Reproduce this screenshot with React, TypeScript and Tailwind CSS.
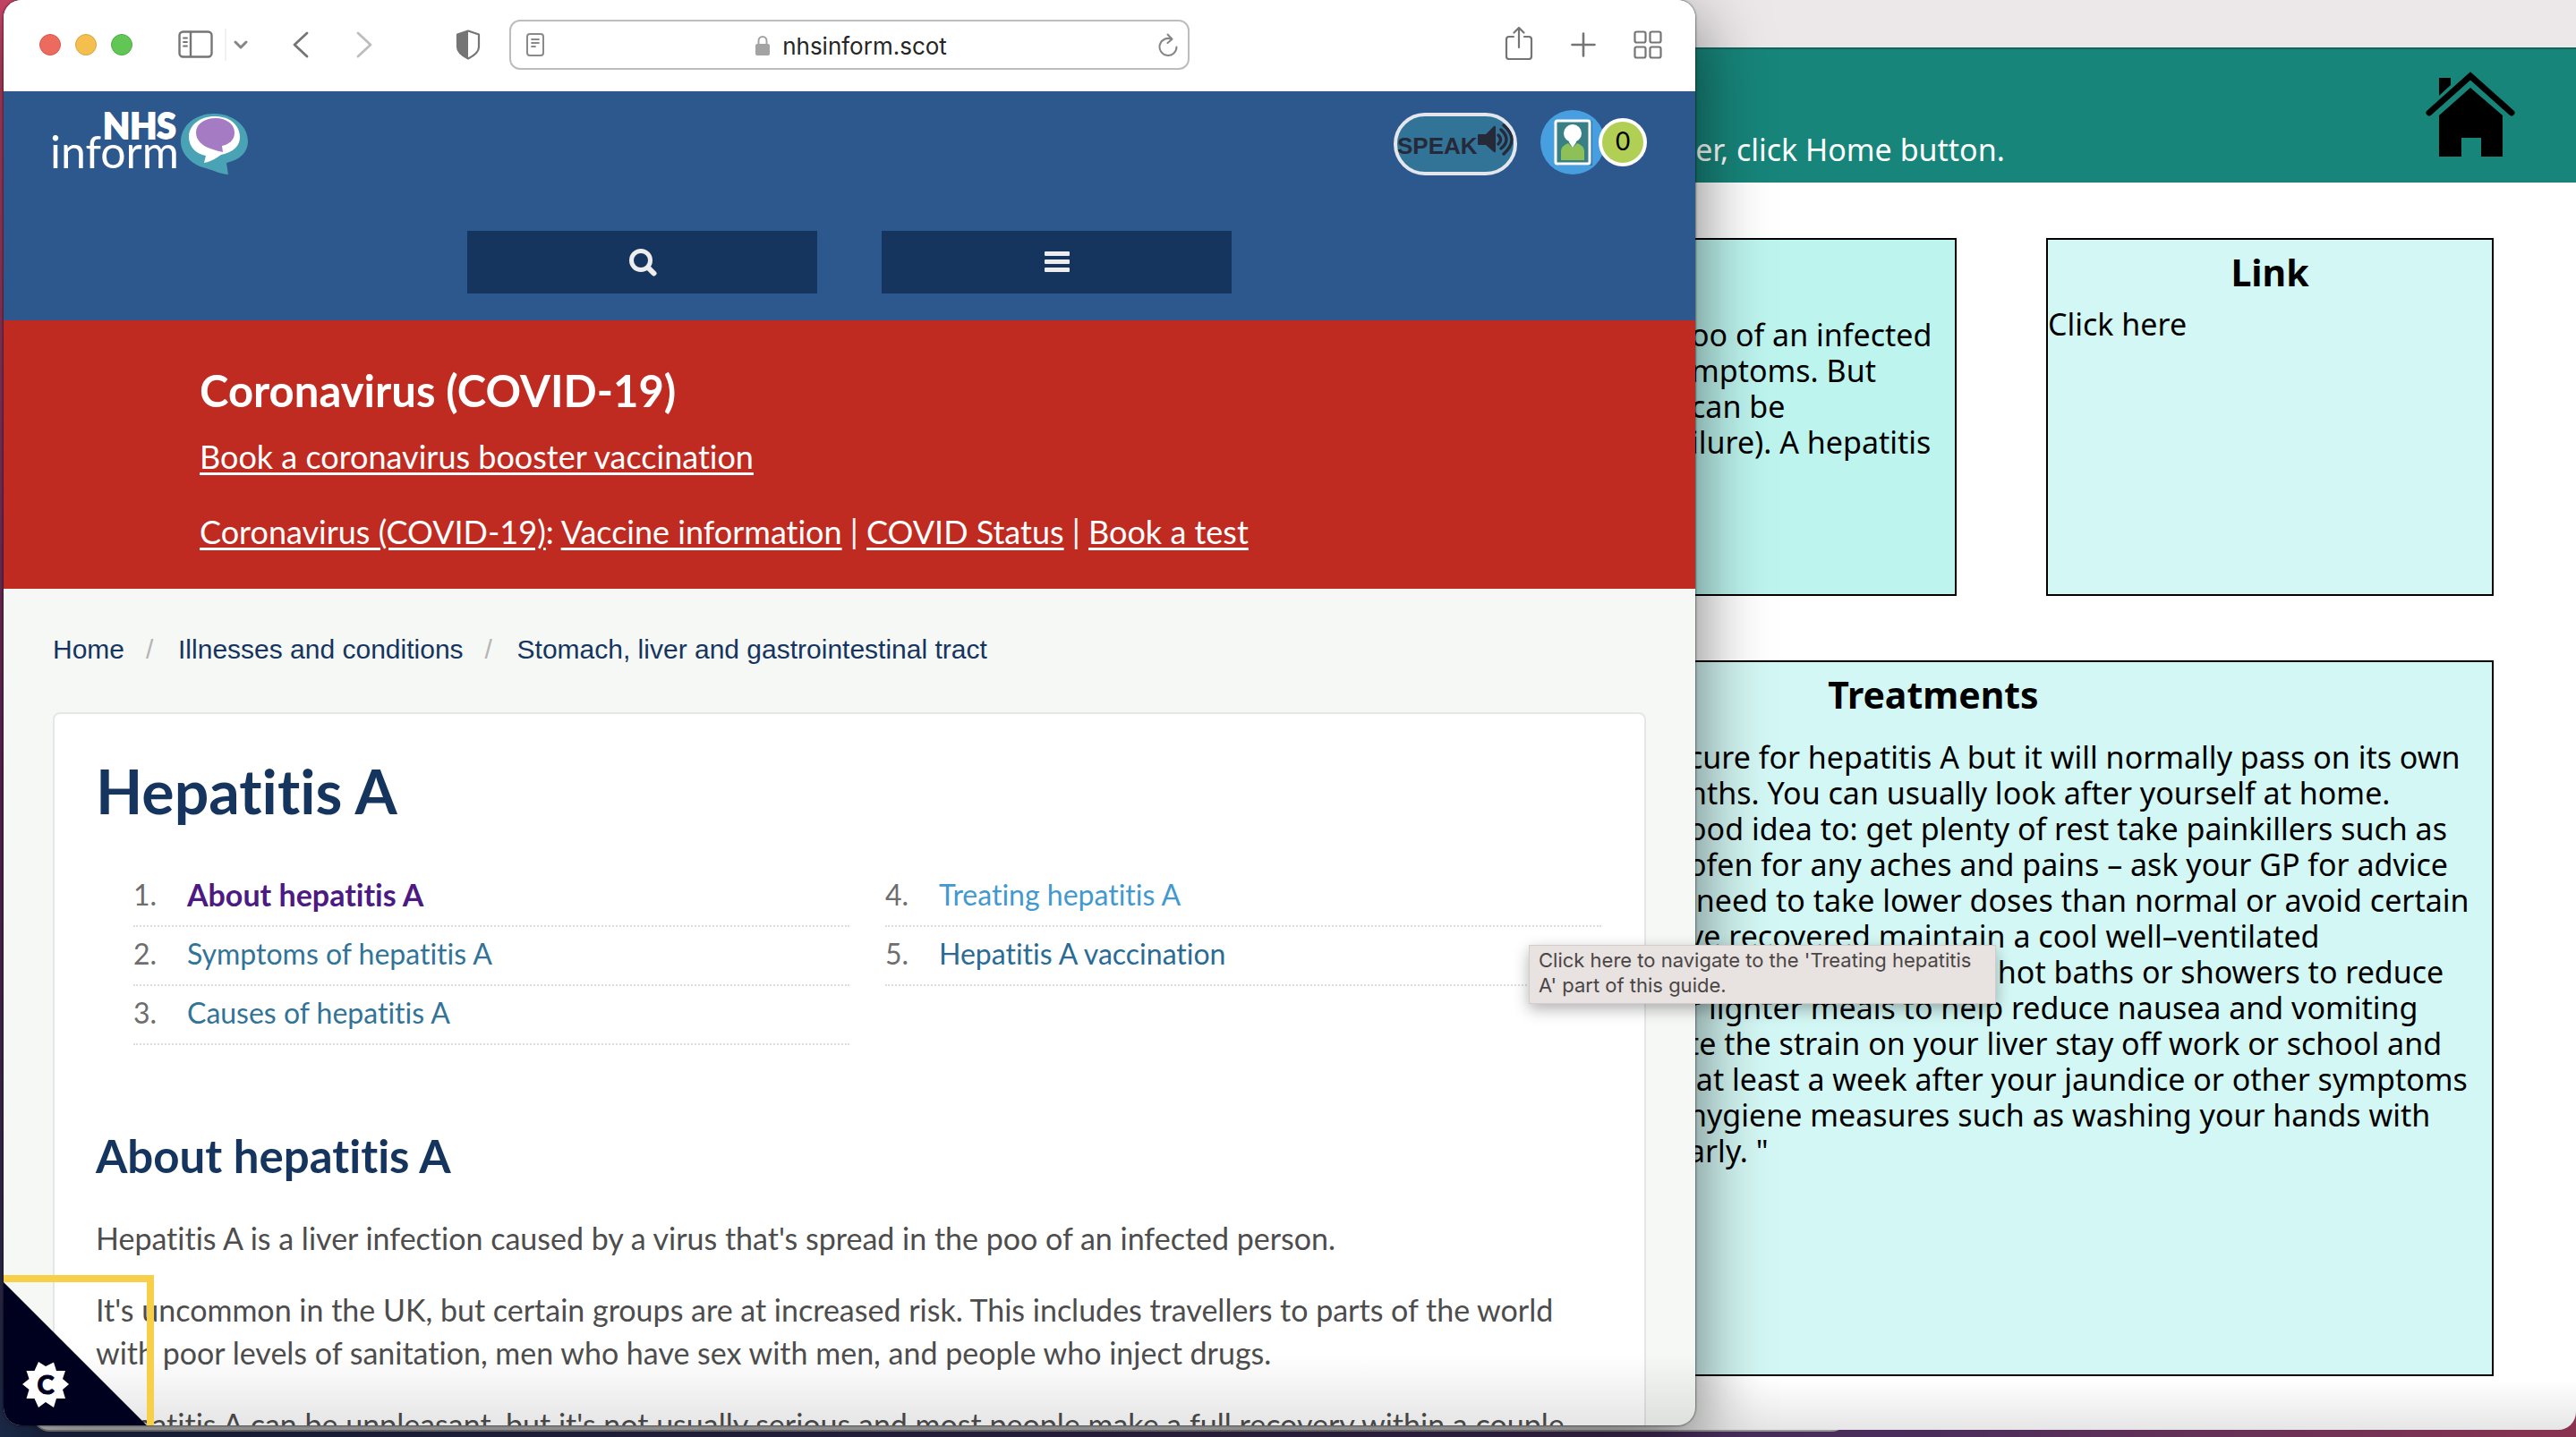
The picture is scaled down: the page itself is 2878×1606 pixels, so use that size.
import React from "react";

const covidLinks = ["Vaccine information", "COVID Status", "Book a test"];

const crumbs = ["Home", "Illnesses and conditions", "Stomach, liver and gastrointestinal tract"];

const guideColumns = [
  {
    start: 1,
    items: [
      { text: "About hepatitis A", tone: "text-[34px] font-bold text-[#4c1a82]" },
      { text: "Symptoms of hepatitis A", tone: "text-[#327398]" },
      { text: "Causes of hepatitis A", tone: "text-[#327398]" },
    ],
  },
  {
    start: 4,
    items: [
      { text: "Treating hepatitis A", tone: "text-[#4299cf]" },
      { text: "Hepatitis A vaccination", tone: "text-[#2a6b95]" },
    ],
  },
];

const overviewLines = ["oo of an infected", "mptoms. But", "can be", "ilure). A hepatitis"];

const treatmentLines = [
  "cure for hepatitis A but it will normally pass on its own",
  "nths. You can usually look after yourself at home.",
  "ood idea to: get plenty of rest take painkillers such as",
  "ofen for any aches and pains – ask your GP for advice",
  " need to take lower doses than normal or avoid certain",
  "ve recovered maintain a cool well–ventilated",
  "  loose clothing avoid hot baths or showers to reduce",
  "r lighter meals to help reduce nausea and vomiting",
  "te the strain on your liver stay off work or school and",
  " at least a week after your jaundice or other symptoms",
  "hygiene measures such as washing your hands with",
  "arly. \"",
];

function SidebarIcon() {
  return (
    <svg width="40" height="32" viewBox="0 0 40 32" fill="none" stroke="#757575" strokeWidth="2.4" strokeLinecap="round">
      <rect x="1.5" y="1.5" width="36" height="28" rx="4" />
      <path d="M14 2v27" />
      <path d="M6 8.5h4M6 13h4M6 17.500h4" strokeWidth="1.8" />
    </svg>
  );
}

function ShieldIcon() {
  return (
    <svg width="28" height="34" viewBox="0 0 28 34">
      <path d="M14 1.500 26 5.500v14c0 5.500-5 9.500-12 13C7 29 2 25 2 19.500v-14z" fill="white" stroke="#757575" strokeWidth="2.200" strokeLinejoin="round" />
      <path d="M14 1.500v31C7 29 2 25 2 19.500v-14z" fill="#757575" />
    </svg>
  );
}

function ReaderIcon() {
  return (
    <svg width="20" height="26" viewBox="0 0 20 26" fill="none" stroke="#8a8a8a" strokeWidth="2" strokeLinecap="round">
      <rect x="1" y="1" width="18" height="24" rx="3" />
      <path d="M6 7h8M6 11h8M6 15h4" strokeWidth="1.800" />
    </svg>
  );
}

function LockIcon() {
  return (
    <svg width="16" height="24" viewBox="0 0 16 24">
      <rect x="0" y="10" width="16" height="13" rx="2" fill="#a3a3a3" />
      <path d="M3.500 11V6.500a4.500 4.500 0 0 1 9 0V11" fill="none" stroke="#a3a3a3" strokeWidth="2" />
    </svg>
  );
}

function ReloadIcon() {
  return (
    <svg width="22" height="26" viewBox="0 0 22 26" fill="none" stroke="#858585" strokeWidth="2" strokeLinecap="round" strokeLinejoin="round">
      <path d="M20.500 15.500A9.500 9.500 0 1 1 15 6.800" />
      <path d="M10.500 1.500 15.500 6.800 10.500 11" />
    </svg>
  );
}

function ShareIcon() {
  return (
    <svg width="32" height="38" viewBox="0 0 32 38" fill="none" stroke="#757575" strokeWidth="2.200" strokeLinecap="round" strokeLinejoin="round">
      <path d="M10 12H5a3 3 0 0 0-3 3v19a3 3 0 0 0 3 3h22a3 3 0 0 0 3-3V15a3 3 0 0 0-3-3h-5" />
      <path d="M16 24V2M10.500 7.500 16 2l5.500 5.500" />
    </svg>
  );
}

function PlusIcon() {
  return (
    <svg width="28" height="28" viewBox="0 0 28 28" stroke="#757575" strokeWidth="2.600" strokeLinecap="round">
      <path d="M14 1.500v25M1.500 14h25" />
    </svg>
  );
}

function GridIcon() {
  return (
    <svg width="32" height="32" viewBox="0 0 32 32" fill="none" stroke="#757575" strokeWidth="2.200">
      <rect x="1.500" y="1.500" width="12" height="12" rx="2" />
      <rect x="18.500" y="1.500" width="12" height="12" rx="2" />
      <rect x="1.500" y="18.500" width="12" height="12" rx="2" />
      <rect x="18.500" y="18.500" width="12" height="12" rx="2" />
    </svg>
  );
}

function Toolbar() {
  return (
    <div className="flex h-[102px] shrink-0 items-center bg-white pr-[37px] pb-[2px] pl-[40px]">
      <div className="flex w-[525px] items-center">
        <button aria-label="Close window" className="size-6 rounded-full border border-[#d8584c] bg-[#ed6a5f]" />
        <button aria-label="Minimise window" className="ml-4 size-6 rounded-full border border-[#dba53c] bg-[#f5bf4f]" />
        <button aria-label="Zoom window" className="ml-4 size-6 rounded-full border border-[#52ac45] bg-[#62c655]" />
        <button aria-label="Show sidebar" className="ml-[51px]"><SidebarIcon /></button>
        <span className="ml-3 h-9 w-0.5 bg-[#f1f1f1]" />
        <button aria-label="Sidebar options" className="ml-2">
          <svg width="16" height="12" viewBox="0 0 16 12" fill="none" stroke="#858585" strokeWidth="3" strokeLinecap="round" strokeLinejoin="round"><path d="M2 3l6 6 6-6" /></svg>
        </button>
        <button aria-label="Back" className="ml-[50px]">
          <svg width="18" height="30" viewBox="0 0 18 30" fill="none" stroke="#757575" strokeWidth="2.800" strokeLinecap="round" strokeLinejoin="round"><path d="M16 2 2 15l14 13" /></svg>
        </button>
        <button aria-label="Forward" className="ml-[53px]">
          <svg width="18" height="30" viewBox="0 0 18 30" fill="none" stroke="#bdbdbd" strokeWidth="2.800" strokeLinecap="round" strokeLinejoin="round"><path d="m2 2 14 13L2 28" /></svg>
        </button>
        <button aria-label="Privacy report" className="ml-[93px]"><ShieldIcon /></button>
      </div>
      <div className="flex h-14 w-[760px] items-center justify-between rounded-xl border-2 border-[#bdbdbd] pr-[11px] pl-[17px]">
        <button aria-label="Reader view"><ReaderIcon /></button>
        <div className="flex items-center gap-3.5 pt-0.5 font-[Inter,sans-serif] text-[26px] text-[#262626]">
          <LockIcon />
          <span>nhsinform.scot</span>
        </div>
        <button aria-label="Reload"><ReloadIcon /></button>
      </div>
      <div className="flex flex-1 items-center justify-end gap-[42px]">
        <button aria-label="Share" className="-mt-1"><ShareIcon /></button>
        <button aria-label="New tab"><PlusIcon /></button>
        <button aria-label="Tab overview"><GridIcon /></button>
      </div>
    </div>
  );
}

function NhsLogo() {
  return (
    <svg width="232" height="96" viewBox="-6 -16 232 96" role="img" aria-label="NHS inform">
      <text x="57" y="29" fontFamily="Lato, sans-serif" fontWeight="900" fontSize="39" fill="white" stroke="white" strokeWidth="1.8">NHS</text>
      <text x="-2" y="62" fontFamily="Lato, sans-serif" fontWeight="400" fontSize="50" fill="white">inform</text>
      <path d="M181 1C160 1 144 14.500 144 32.500 144 47 158 59 172 62 182 65 190 69 197 69L195 56C209 53 219 45 219 32 219 14 202 1 181 1Z" fill="#4aa2b5" />
      <path d="M182 4C165 4 153 14 153 27 153 38 161 46 172 48L170 56C180 54 184 50 189 47 202 44 210 38 210 27 210 14 199 4 182 4Z" fill="white" />
      <path d="M183 6C170 6 161 13 161 22 161 31 168 37 177 40 182 42 187 43 191 44L190 37C199 35 204 30 204 22 204 13 195 6 183 6Z" fill="#a57cc4" />
    </svg>
  );
}

function SiteHeader() {
  return (
    <header className="flex h-64 shrink-0 flex-col bg-[#2d588d] px-[54px] pt-2">
      <div className="flex h-[92px] items-start justify-between">
        <a href="#home" className="-ml-1.5"><NhsLogo /></a>
        <div className="mt-3 flex items-center">
          <button className="mt-1 mr-[26px] flex h-[70px] w-[138px] items-center rounded-full border-4 border-[#e4e6ed] bg-[#327398] font-[Liberation_Sans,sans-serif] text-[26px] font-bold text-[#262a38]">
            <span className="pt-1">SPEAK</span>
            <svg className="-mt-2.5 shrink-0" width="42" height="36" viewBox="0 0 42 36" fill="none" stroke="#262a38" strokeWidth="3.400" strokeLinecap="round">
              <path d="M1 12h8L18 3q2-1 2 1v27q0 2-2 1L9 24H1q-1 0-1-1V13q0-1 1-1Z" fill="#262a38" stroke="none" />
              <path d="M23 13q5 5 0 10M26 7q12 11 0 21M29 2q18 16 0 32" />
            </svg>
          </button>
          <a href="#profile" aria-label="Info for me" className="flex items-center">
            <svg width="72" height="72" viewBox="0 0 72 72">
              <circle cx="36" cy="36" r="36" fill="#489fdf" />
              <path d="M20 12h38v50H20z" fill="#2f78ae" />
              <rect x="17" y="12" width="38" height="48" rx="2" fill="#387f86" stroke="white" strokeWidth="3" />
              <path d="M23 56V46q0-6 8-9l5 5 5-5q8 3 8 9v10z" fill="#8dc056" />
              <circle cx="36" cy="26" r="10" fill="white" />
              <path d="M32 33h8v3l-4 6-4-6z" fill="white" />
            </svg>
            <span className="z-10 -ml-[7px] flex size-[54px] items-center justify-center rounded-full border-4 border-white bg-[#b0cf54] pb-1 font-[Lato,sans-serif] text-[28px] text-black">0</span>
          </a>
        </div>
      </div>
      <div className="mt-14 flex justify-center gap-[72px]">
        <button aria-label="Search" className="flex h-[70px] w-[391px] items-center justify-center bg-[#15355f]">
          <svg width="32" height="32" viewBox="0 0 32 32" fill="none" stroke="#ededed" strokeLinecap="round">
            <circle cx="14" cy="14" r="10.500" strokeWidth="5" />
            <path d="m23 23 5.500 5.500" strokeWidth="6" />
          </svg>
        </button>
        <button aria-label="Menu" className="flex h-[70px] w-[391px] items-center justify-center bg-[#15355f]">
          <svg width="28" height="24" viewBox="0 0 28 24" fill="#ededed">
            <rect y="0" width="28" height="5" rx="1" />
            <rect y="9" width="28" height="5" rx="1" />
            <rect y="18" width="28" height="5" rx="1" />
          </svg>
        </button>
      </div>
    </header>
  );
}

function CovidBanner() {
  return (
    <section className="shrink-0 bg-[#bf2b20] px-[219px] pt-12 pb-[41px] text-[36px] leading-[46px] text-white">
      <h2 className="text-[49px] leading-[60px] font-bold">Coronavirus (COVID-19)</h2>
      <p className="mt-[21px]">
        <a href="#booster" className="underline underline-offset-4">Book a coronavirus booster vaccination</a>
      </p>
      <p className="mt-[38px] whitespace-nowrap">
        <a href="#covid" className="underline underline-offset-4">Coronavirus (COVID-19)</a>:{" "}
        {covidLinks.map((text, i) => (
          <React.Fragment key={text}>
            {i > 0 && " | "}
            <a href="#covid" className="underline underline-offset-4">{text}</a>
          </React.Fragment>
        ))}
      </p>
    </section>
  );
}

function Breadcrumbs() {
  return (
    <nav aria-label="Breadcrumb" className="pt-12 pb-[50px] font-[Liberation_Sans,sans-serif] text-[30px] leading-10 text-[#15355f]">
      <ol className="flex">
        {crumbs.map((text, i) => (
          <li key={text} className="flex">
            {i > 0 && <span className="w-[60px] pl-6 text-[#b5b5b5]">/</span>}
            <a href="#crumb">{text}</a>
          </li>
        ))}
      </ol>
    </nav>
  );
}

function Article() {
  return (
    <article className="rounded-lg border-2 border-[#e4e7e5] bg-white pt-12 pr-12 pl-[46px] text-[34px] leading-[48px] text-[#4d4d4d]">
      <h1 className="text-[68px] leading-[76px] font-bold text-[#15355f]">Hepatitis A</h1>
      <div className="mt-12 grid grid-cols-2 gap-10 pl-[42px] text-[32px]">
        {guideColumns.map((column) => (
          <ol key={column.start} start={column.start}>
            {column.items.map((item, i) => (
              <li key={item.text} className="flex border-b-2 border-dotted border-[#dcdcdc] pb-1 leading-[60px]">
                <span className="w-[60px] text-[#6e6e6e]">{column.start + i}.</span>
                <a href="#part" className={item.tone}>{item.text}</a>
              </li>
            ))}
          </ol>
        ))}
      </div>
      <h2 className="mt-[94px] text-[51px] leading-[60px] font-bold text-[#15355f]">About hepatitis A</h2>
      <div className="mt-[38px] flex flex-col gap-8 pr-4">
        <p>Hepatitis A is a liver infection caused by a virus that's spread in the poo of an infected person.</p>
        <p>
          It's uncommon in the UK, but certain groups are at increased risk. This includes travellers to parts of the world
          with poor levels of sanitation, men who have sex with men, and people who inject drugs.
        </p>
        <p>Hepatitis A can be unpleasant, but it's not usually serious and most people make a full recovery within a couple of months.</p>
      </div>
    </article>
  );
}

function CookieControl() {
  return (
    <button aria-label="Cookie settings" className="absolute bottom-0 left-0 size-[168px] border-t-8 border-r-8 border-[#f8cf48]">
      <svg className="size-full" viewBox="0 0 160 160">
        <path d="M0 0v160h160z" fill="#00001f" />
        <path
          d="M39 89 L34.500 99 L25.500 99 L28.500 108 L21 114 L28.500 120 L25.500 130 L34.500 130 L39 140 L47 134 L56 140 L59 130 L69 130 L66 120 L73 114 L66 108 L69 99 L59 99 L56 89.500 L47 94Z"
          fill="white"
        />
        <text x="47" y="124.500" textAnchor="middle" fontFamily="Lato, sans-serif" fontWeight="900" fontSize="29" fill="#00001f" stroke="#00001f">C</text>
      </svg>
    </button>
  );
}

function BrowserWindow() {
  return (
    <div className="absolute top-0 right-[984px] bottom-[13px] left-1 flex flex-col overflow-hidden rounded-[20px] bg-[#f6f8f6] font-[Lato,sans-serif] [font-variant-ligatures:none] shadow-[0_0_2px_1px_rgba(0,0,0,0.4),0_24px_80px_rgba(0,0,0,0.55)]">
      <Toolbar />
      <SiteHeader />
      <CovidBanner />
      <main className="min-h-0 flex-1 overflow-hidden px-[55px]">
        <Breadcrumbs />
        <Article />
      </main>
      <div className="pointer-events-none absolute inset-x-0 bottom-0 h-20 bg-linear-to-b from-transparent to-black/10" />
      <CookieControl />
    </div>
  );
}

function HomeIcon() {
  return (
    <svg width="102" height="96" viewBox="0 0 102 96">
      <path d="M15 7h13v8L15 27z" />
      <path d="M50 18 86 49v46H62V74H40v21H15V49z" />
      <path d="M4 46 50 5l46 41" fill="none" stroke="#17857a" strokeWidth="13" />
      <path d="M4 46 50 5l46 41" fill="none" stroke="black" strokeWidth="7" strokeLinecap="round" />
    </svg>
  );
}

function GuideWindow() {
  return (
    <div className="absolute top-0 right-0 bottom-2 left-9 flex flex-col overflow-hidden rounded-b-[20px] bg-white font-[Noto_Sans,sans-serif] text-[34px] leading-10 text-black">
      <div className="h-[55px] shrink-0 border-b-2 border-[#14665d] bg-[#ece8e9]" />
      <header className="flex h-[149px] shrink-0 items-start justify-between bg-[#17857a] pr-[66px] pl-[1840px]">
        <p className="mt-[92px] whitespace-nowrap text-white">ker, click Home button.</p>
        <a href="#home" aria-label="Home" className="mt-[25px]"><HomeIcon /></a>
      </header>
      <main className="flex flex-col items-end gap-[72px] pt-[62px] pr-[92px]">
        <div className="flex gap-[100px]">
          <section className="h-[400px] w-[652px] border-2 border-black bg-[#bdf4ee] pt-[86px] pl-[353px]">
            {overviewLines.map((line) => (
              <p key={line} className="whitespace-pre">{line}</p>
            ))}
          </section>
          <section className="h-[400px] w-[500px] border-2 border-black bg-[#d3f7f4] pt-2">
            <h2 className="text-center text-[41px] leading-[56px] font-bold">Link</h2>
            <a href="#link" className="mt-2.5 block">Click here</a>
          </section>
        </div>
        <section className="h-[800px] w-[1252px] border-2 border-black bg-[#d3f7f4] pt-2">
          <h2 className="text-center text-[41px] leading-[56px] font-bold">Treatments</h2>
          <div className="mt-[22px] pl-[350px]">
            {treatmentLines.map((line) => (
              <p key={line} className="whitespace-pre">{line}</p>
            ))}
          </div>
        </section>
      </main>
      <div className="pointer-events-none absolute inset-x-0 bottom-0 h-14 bg-linear-to-b from-transparent to-black/10" />
    </div>
  );
}

export default function App() {
  return (
    <div className="relative h-screen w-full overflow-hidden bg-linear-to-r from-[#1f2c50] via-[#4b2d5c] via-75% to-[#8a3350]">
      <div className="absolute inset-y-0 left-0 w-9 bg-linear-to-b from-[#d2486c] via-[#6a2a62] via-55% to-[#1f3054]" />
      <div className="absolute bottom-1.5 left-9 h-20 w-[2030px] rounded-b-[20px] bg-[#9a9a9a]" />
      <GuideWindow />
      <BrowserWindow />
      <div role="tooltip" className="absolute top-[1056px] left-[1708px] w-[522px] border border-[#d2cccb] bg-[#e8e2e1] px-2.5 py-0.5 pb-1.5 font-[Inter,sans-serif] text-[22px] leading-7 whitespace-nowrap text-[#4a4646] shadow-[0_6px_16px_rgba(0,0,0,0.3)]">
        Click here to navigate to the 'Treating hepatitis
        <br />
        A' part of this guide.
      </div>
    </div>
  );
}
